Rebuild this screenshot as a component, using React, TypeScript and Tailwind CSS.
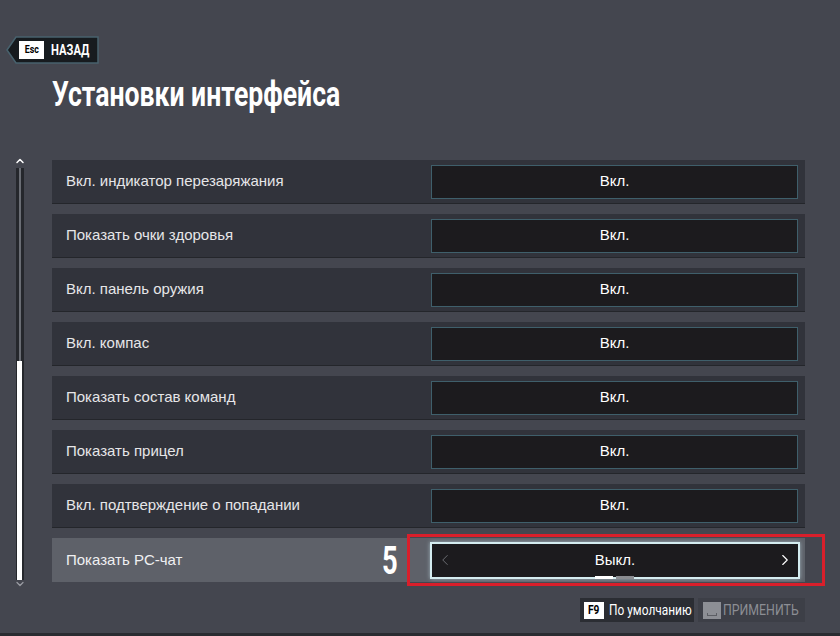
import { ChevronLeft, ChevronRight, ChevronUp, ChevronDown } from 'lucide-react';

// Строки настроек интерфейса
const rows = [
  { label: 'Вкл. индикатор перезаряжания', value: 'Вкл.' },
  { label: 'Показать очки здоровья', value: 'Вкл.' },
  { label: 'Вкл. панель оружия', value: 'Вкл.' },
  { label: 'Вкл. компас', value: 'Вкл.' },
  { label: 'Показать состав команд', value: 'Вкл.' },
  { label: 'Показать прицел', value: 'Вкл.' },
  { label: 'Вкл. подтверждение о попадании', value: 'Вкл.' },
];

const heading = { fontFamily: 'Roboto, "Liberation Sans", sans-serif' };
const body = { fontFamily: '"Liberation Sans", Arial, sans-serif' };

function BackButton() {
  return (
    <div className="relative ml-[6px] flex h-[28px] w-[93px] items-center">
      <svg className="absolute left-0 top-0" width="93" height="28" viewBox="0 0 93 28">
        <path d="M1 14 L10 1 H92 V27 H10 Z" fill="#171b1f" stroke="#48626e" strokeWidth="1.5" />
      </svg>
      <div className="relative ml-[13px] flex h-[18px] w-[26px] items-center justify-center bg-white text-black">
        <span className="inline-block origin-center scale-x-[0.8] text-[11px] font-bold" style={heading}>Esc</span>
      </div>
      <span className="relative ml-[7px] inline-block origin-left scale-x-[0.8] text-[14px] font-bold text-white" style={heading}>
        НАЗАД
      </span>
    </div>
  );
}

function Scrollbar() {
  return (
    <div className="flex w-[52px] flex-col items-start pl-[14px]">
      <ChevronUp size={12} strokeWidth={3} className="text-white -mt-[5px]" />
      <div className="relative ml-[2px] mt-[1px] h-[412px] w-[8px] bg-[#25272c]">
        <div className="absolute left-[3px] top-0 h-[193px] w-[2px] bg-[#6a6d74]" />
        <div className="absolute bottom-0 left-[1px] h-[219px] w-[5px] bg-white" />
      </div>
      <ChevronDown size={12} strokeWidth={2.5} className="text-[#9a9ca3] -mt-[2px]" />
    </div>
  );
}

function Row({ label, value }: { label: string; value: string }) {
  return (
    <div className="mb-[10px] flex h-[44px] items-center justify-between border-b border-[#24262b] bg-[#31333b] pl-[14px] pr-[7px]">
      <span className="text-[15px] text-[#e6e6e8]" style={body}>
        {label}
      </span>
      <div className="flex h-[34px] w-[367px] items-center justify-center border border-[#3f5f6b] bg-[#1c1b1e] text-[15px] text-white" style={body}>
        {value}
      </div>
    </div>
  );
}

function SelectedRow() {
  return (
    <div className="relative flex h-[44px] items-center justify-between bg-[#5e6169] pl-[14px] pr-[5px]">
      <span className="text-[15px] text-[#f0f0f2]" style={body}>
        Показать PC-чат
      </span>
      <div className="relative flex h-[37px] w-[370px] items-center justify-between border-2 border-[#d4ecf0] bg-[#1c1b1e] px-[4px] text-[15px] text-white shadow-[0_0_4px_rgba(200,235,245,0.6)]" style={body}>
        <ChevronLeft size={18} strokeWidth={1.3} className="text-[#6c6e73]" />
        <span>Выкл.</span>
        <ChevronRight size={18} strokeWidth={1.5} className="text-white" />
        <div className="absolute bottom-[-2px] left-[163px] flex gap-[3px]">
          <div className="h-[3px] w-[18px] bg-white" />
          <div className="h-[3px] w-[18px] bg-[#8a8c91]" />
        </div>
      </div>
      {/* номер-пометка и красная рамка поверх строки */}
      <span className="absolute left-[330px] top-[4px] inline-block origin-left scale-x-[0.72] text-[38px] font-bold leading-none text-white" style={heading}>
        5
      </span>
      <div className="pointer-events-none absolute left-[355px] top-[-4px] h-[52px] w-[418px] border-[3px] border-[#d91f2b]" />
    </div>
  );
}

export default function App() {
  return (
    <div className="flex h-[636px] w-[840px] flex-col overflow-hidden bg-[#44464f]">
      <div className="pt-[36px]">
        <BackButton />
      </div>
      <h1 className="ml-[52px] mt-[11px] inline-block origin-left scale-x-[0.76] text-[35px] font-bold leading-[40px] text-white" style={heading}>
        Установки интерфейса
      </h1>

      <div className="mt-[45px] flex">
        <Scrollbar />
        <div className="w-[753px]">
          {rows.map((r) => (
            <Row key={r.label} label={r.label} value={r.value} />
          ))}
          <SelectedRow />
          <div className="mt-[16px] flex justify-end gap-[4px]">
            <div className="flex h-[24px] w-[114px] items-center bg-[#2b2d33] px-[4px]">
              <div className="flex h-[17px] w-[20px] shrink-0 items-center justify-center bg-white text-black">
                <span className="inline-block scale-x-[0.85] text-[12px] font-bold" style={heading}>F9</span>
              </div>
              <span className="ml-[5px] inline-block origin-left scale-x-[0.85] whitespace-nowrap text-[14px] text-white" style={heading}>
                По умолчанию
              </span>
            </div>
            <div className="flex h-[24px] w-[107px] items-center bg-[#3d3f47] px-[5px]">
              <div className="flex h-[17px] w-[18px] shrink-0 items-end justify-center bg-[#8d8f95] pb-[3px]">
                <div className="h-[3px] w-[10px] border-x border-b border-[#5c5e64]" />
              </div>
              <span className="ml-[2px] inline-block origin-left scale-x-[0.88] whitespace-nowrap text-[14px] text-[#8c8e94]" style={heading}>
                ПРИМЕНИТЬ
              </span>
            </div>
          </div>
        </div>
      </div>
      <div className="mt-auto h-[3px] w-full bg-[#2a2c31]" />
    </div>
  );
}
